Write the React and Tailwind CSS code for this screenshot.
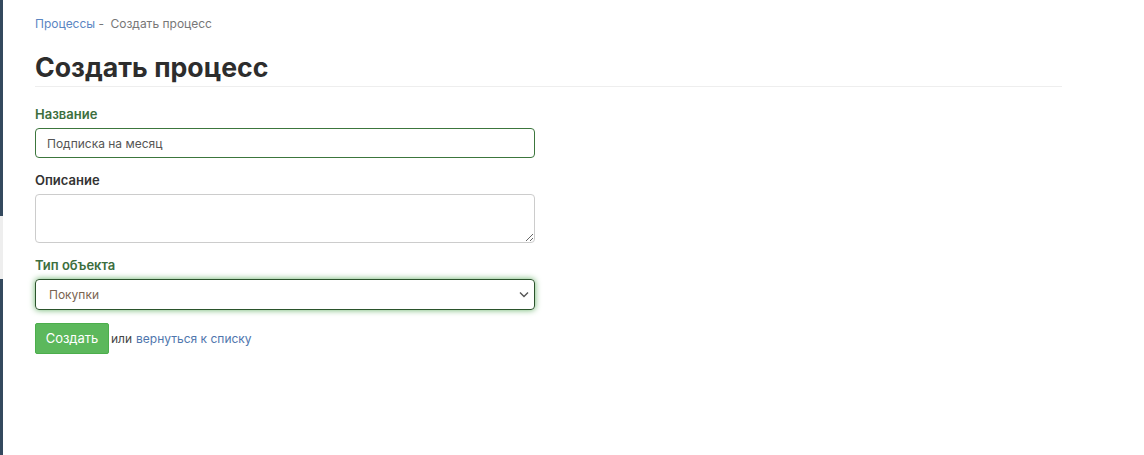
import React from "react";

export default function App() {
  return (
    <div className="flex min-h-[455px] w-[1144px] bg-white" style={{ fontFamily: "Inter, 'Noto Sans', sans-serif" }}>
      <div className="flex w-[3px] shrink-0 flex-col">
        <div className="h-[216px] bg-[#34495e]"></div>
        <div className="h-[63px] bg-[#eeeeee]"></div>
        <div className="flex-1 bg-[#34495e]"></div>
      </div>
      <div className="flex-1 pl-[32px] pr-[82px]">
        <div className="pt-[15px] text-[12px] leading-[18px] text-[#777]">
          <span className="text-[#5b86c2]">Процессы</span>
          <span className="text-[#777]"> - </span>
          <span className="ml-[3px]">Создать процесс</span>
        </div>
        <h1 className="mt-[18px] border-b border-[#eeeeee] pb-[3px] text-[26.7px] font-bold leading-[32px] text-[#2d2d2d]">
          Создать процесс
        </h1>
        <div className="mt-[18px] w-[500px]">
          <label className="block text-[13px] font-semibold leading-[18px] text-[#3c6e3d]">Название</label>
          <input
            className="mt-[5px] block h-[30px] w-full rounded-[4px] border border-[#3c763d] px-[11px] text-[12px] text-[#555] outline-none"
            defaultValue="Подписка на месяц"
          />
          <label className="mt-[13px] block text-[13px] font-semibold leading-[18px] text-[#333]">Описание</label>
          <textarea className="mt-[5px] block h-[49px] w-full rounded-[4px] border border-[#cccccc] px-[11px] text-[12px] outline-none"></textarea>
          <label className="mt-[13px] block text-[13px] font-semibold leading-[18px] text-[#3c6e3d]">Тип объекта</label>
          <div className="relative mt-[5px] h-[31px] w-full rounded-[4px] border border-[#2b542c] shadow-[0_0_6px_#67b168]">
            <div className="flex h-full items-center pl-[13px] text-[12px] text-[#7a6450]">Покупки</div>
            <svg className="absolute right-[5px] top-[11px]" width="10" height="7" viewBox="0 0 10 7" fill="none">
              <path d="M1 1.5L5 5.5L9 1.5" stroke="#555" strokeWidth="1.4" />
            </svg>
          </div>
          <div className="mt-[13px] flex items-center text-[12px]">
            <button className="h-[31px] w-[74px] rounded-[2px] border border-[#4cae4c] bg-[#5cb85c] text-[13px] text-white">
              Создать
            </button>
            <span className="ml-[2px] text-[#444]">или</span>
            <span className="ml-[4px] text-[#4f76ad]">вернуться к списку</span>
          </div>
        </div>
      </div>
    </div>
  );
}
